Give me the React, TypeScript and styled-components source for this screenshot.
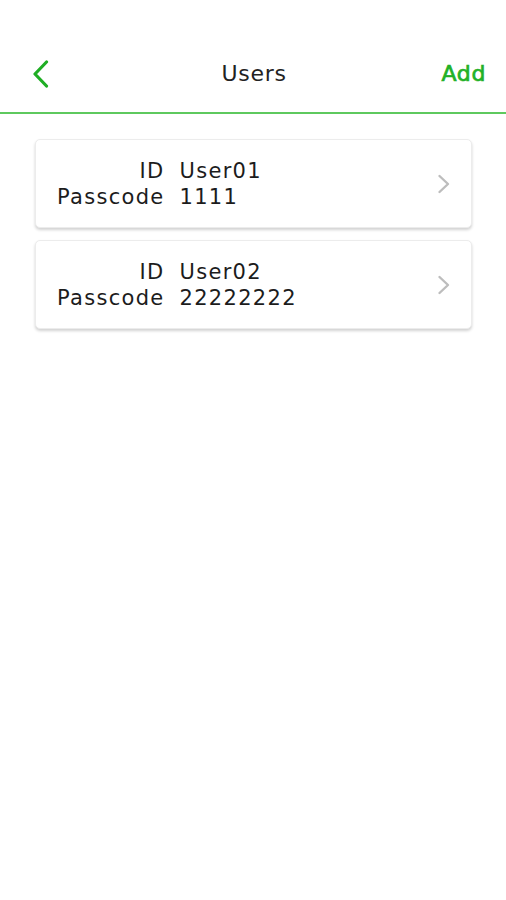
import React from "react";
import styled, { createGlobalStyle } from "styled-components";

const Global = createGlobalStyle`
  html, body { margin: 0; padding: 0; background: #ffffff; }
  body { font-family: "DejaVu Sans", "Noto Sans", sans-serif; }
`;

const Page = styled.div`
  width: 506px;
  min-height: 900px;
  background: #ffffff;
`;

const Header = styled.header`
  display: grid;
  grid-template-columns: 1fr auto 1fr;
  align-items: center;
  height: 114px;
  box-sizing: border-box;
  padding: 35px 20px 0 20px;
  border-bottom: 2px solid #5ec95e;
  & > * { height: 74px; display: flex; align-items: center; }
`;

const BackButton = styled.div`
  justify-self: start;
  margin-left: 12px;
  color: #1fae24;
`;

const Title = styled.div`
  font-size: 22px;
  color: #222222;
  letter-spacing: 0.7px;
  margin-left: 2px;
`;

const AddButton = styled.div`
  justify-self: end;
  font-size: 22px;
  font-weight: normal;
  color: #22b127;
  letter-spacing: 0.6px;
  -webkit-text-stroke: 0.7px #22b127;
`;

const List = styled.div`
  display: flex;
  flex-direction: column;
  gap: 12px;
  padding: 25px 34px 0 35px;
`;

const Card = styled.div`
  display: flex;
  align-items: center;
  justify-content: space-between;
  height: 89px;
  box-sizing: border-box;
  padding: 0 20px 0 21px;
  background: #ffffff;
  border: 1px solid #ececec;
  border-radius: 5px;
  box-shadow: 0 2px 3px rgba(0, 0, 0, 0.18);
`;

const Fields = styled.div`
  display: grid;
  grid-template-columns: auto auto;
  column-gap: 15px;
  font-size: 21px;
  line-height: 26px;
  letter-spacing: 1.3px;
  color: #1c1c1c;
`;

const Label = styled.span`
  justify-self: end;
`;

const Value = styled.span`
  justify-self: start;
`;

const Chevron = styled.div`
  display: flex;
  color: #bdbdbd;
`;

const users = [
  { id: "User01", passcode: "1111" },
  { id: "User02", passcode: "22222222" },
];

export default function App() {
  return (
    <Page>
      <Global />
      <Header>
        <BackButton>
          <svg width="17" height="28" viewBox="0 0 17 28" fill="none">
            <path d="M14.5 2 L3 14 L14.5 26" stroke="currentColor" strokeWidth="3.2" strokeLinecap="round" strokeLinejoin="round" />
          </svg>
        </BackButton>
        <Title>Users</Title>
        <AddButton>Add</AddButton>
      </Header>
      <List>
        {users.map((u) => (
          <Card key={u.id}>
            <Fields>
              <Label>ID</Label>
              <Value>{u.id}</Value>
              <Label>Passcode</Label>
              <Value>{u.passcode}</Value>
            </Fields>
            <Chevron>
              <svg width="14" height="20" viewBox="0 0 14 20" fill="none">
                <path d="M2.5 2 L11 10 L2.5 18" stroke="currentColor" strokeWidth="2.4" strokeLinecap="round" strokeLinejoin="round" />
              </svg>
            </Chevron>
          </Card>
        ))}
      </List>
    </Page>
  );
}
